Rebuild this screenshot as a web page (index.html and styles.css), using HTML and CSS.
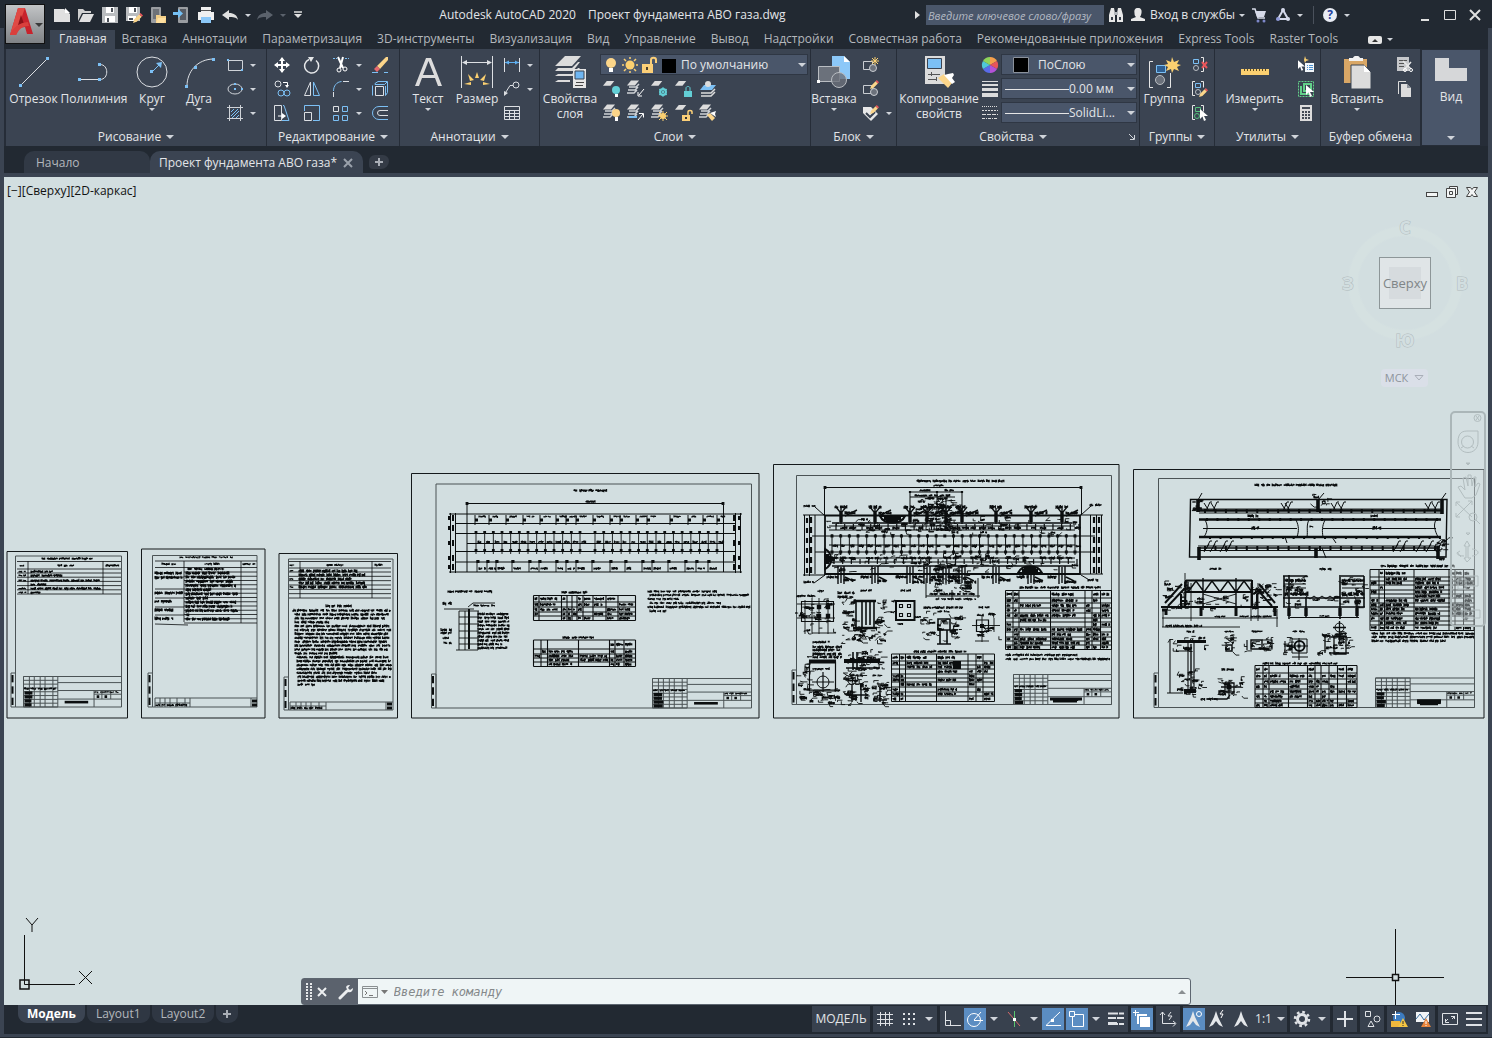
FILE: index.html
```html
<!DOCTYPE html>
<html lang="ru">
<head>
<meta charset="utf-8">
<title>Autodesk AutoCAD 2020 - Проект фундамента АВО газа.dwg</title>
<link rel="stylesheet" href="styles.css">
</head>
<body>
<svg class="sprite" aria-hidden="true">
  <symbol id="stack" viewBox="0 0 16 16"><path d="M4 0h8L8 5H0z" fill="#dcdcdc"/><path d="M2 6.500h7l3-3M1 9.500h7l3-3M0 12.500h7l3-3" fill="none" stroke="#cfd2d6" stroke-width="1.500"/></symbol>
  <symbol id="sheet" viewBox="0 0 16 16"><path d="M4 1h8L8 6H0z" fill="#dcdcdc"/></symbol>
  <symbol id="pencil" viewBox="0 0 8 8"><path d="M0 8l1-3 4-4 2 2-4 4z" fill="#fbd58a"/><path d="M5 1l1-1 2 2-1 1z" fill="#e8555a"/></symbol>
  <symbol id="arrowcur" viewBox="0 0 8 12"><path d="M0 0v10l2.500-2.500L4 12l2-1-2-4h4z" fill="#fff"/></symbol>
  <symbol id="north" viewBox="0 0 18 18"><path d="M9 1l2 6 5 10-4-2-3-4-3 4-4 2 5-10z" fill="#e4e7ea"/></symbol>
</svg>
<div class="app">
  <header class="top">
    <button class="app-button" aria-label="Меню приложения">
      <svg width="27" height="30" viewBox="0 0 27 30"><path d="M2 29L10 2h7l8 26h-6l-2-7-6 1-3 7z" fill="#c8232c"/><path d="M10 2h7l-5 14-4 13H2z" fill="#e04a45"/><path d="M13 9l3 9-6 1z" fill="#8d1219"/><path d="M2 29c3-8 9-12 18-13l1 4c-8 0-10 4-13 9z" fill="#d9403d"/></svg>
      <i class="caret dark"></i>
    </button>
    <div class="titlebar">
      <nav class="qat" aria-label="Быстрый доступ">
        <button aria-label="Создать"><svg width="18" height="18"><path d="M1 3h10l6 5v8H1z" fill="#e0e0e0"/><path d="M12 2l5 5h-5z" fill="#fff"/></svg></button>
        <button aria-label="Открыть"><svg width="18" height="18"><path d="M1 3h5l2 2h6v2H5l-4 8z" fill="#cfcfcf"/><path d="M6 8h11l-4 8H2z" fill="#e0e0e0"/></svg></button>
        <button aria-label="Сохранить"><svg width="18" height="18"><path d="M1 1h16v16H1z" fill="#b9bcbf"/><path d="M5 1h8v6H5zM4 10h10v6H4z" fill="#fff"/><path d="M6 12h2v4H6zM10 2h2v4h-2z" fill="#4a4f57"/></svg></button>
        <button aria-label="Сохранить как"><svg width="18" height="18"><path d="M1 1h14v14H1z" fill="#b9bcbf"/><path d="M4 1h8v6H4zM3 10h8v5H3z" fill="#fff"/><path d="M9 2h2v4H9zM4 12h4v2H4z" fill="#4a4f57"/><use href="#pencil" x="8" y="7" width="10" height="10"/></svg></button>
        <button aria-label="Открыть с мобильного"><svg width="18" height="18"><rect x="2" y="1" width="10" height="16" rx="1" fill="#9a9da1"/><path d="M4 3h6v10H4z" fill="#6e7278"/><path d="M7 9h4l1 1h5v7H7z" fill="#f3cf87"/><path d="M9 12h8l-2 5H7z" fill="#ffe0a0"/></svg></button>
        <button aria-label="Сохранить на мобильный"><svg width="18" height="18"><rect x="5" y="1" width="10" height="16" rx="1" fill="#9a9da1"/><path d="M7 3h6v11H7z" fill="#565b63"/><path d="M0 6h5V3l5 4.500L5 12V9H0z" fill="#74c0f5"/></svg></button>
        <button aria-label="Печать"><svg width="18" height="18"><path d="M4 1h10v5H4zM1 6h16v8h-3v-3H4v3H1z" fill="#f0f0f0"/><path d="M4 4h10v1H4z" fill="#555"/><path d="M4 11h10v6H4z" fill="#8cc8f8"/></svg></button>
        <button aria-label="Отменить"><svg width="18" height="18"><path d="M1 9l7-5v3c5 0 8 2 9 7-2-3-5-3-9-3v3z" fill="#e0e0e0"/></svg></button>
        <button class="drop" aria-label="Список отмены"><i class="caret small"></i></button>
        <button aria-label="Повторить"><svg width="18" height="18"><path d="M17 9l-7-5v3c-5 0-8 2-9 7 2-3 5-3 9-3v3z" fill="#5b626c"/></svg></button>
        <button class="drop" aria-label="Список повтора"><i class="caret small dim"></i></button>
        <button class="drop wide" aria-label="Настройка панели"><svg width="10" height="8"><path d="M1 1h8" stroke="#e0e0e0" stroke-width="1.500"/><path d="M1 3h8L5 7z" fill="#e0e0e0"/></svg></button>
      </nav>
      <h1 class="title"><span>Autodesk AutoCAD 2020</span><span>Проект фундамента АВО газа.dwg</span></h1>
      <div class="info">
        <i class="tri-right"></i>
        <input class="search" type="text" aria-label="Поиск" placeholder="Введите ключевое слово/фразу">
        <button class="i24" aria-label="Найти"><svg width="16" height="16"><path d="M3 1h3l1 5v9H1V8zM13 1h-3L9 6v9h6V8z" fill="#e8e8e8"/><path d="M6 5h4v3H6z" fill="#b5b9be"/><path d="M3 10h2v3H3zM11 10h2v3h-2z" fill="#3a414c"/></svg></button>
        <button class="sign"><svg width="16" height="16"><path d="M8 1c3 0 4 2 3.500 5-.3 2-1 3-1.500 4l5 2v2H1v-2l5-2C4.500 9 4.500 7 4.500 6 4 3 5 1 8 1z" fill="#e8e8e8"/></svg><span>Вход в службы</span><i class="caret small"></i></button>
        <button class="i24" aria-label="Магазин"><svg width="16" height="16"><path d="M1 2h3l3 9h7" fill="none" stroke="#d6dae8" stroke-width="1.500"/><path d="M4 4h11l-2 6H6z" fill="#d6dae8"/><circle cx="7" cy="14" r="1.500" fill="#7d87c9"/><circle cx="13" cy="14" r="1.500" fill="#7d87c9"/></svg></button>
        <button class="i24" aria-label="Autodesk App Store"><svg width="16" height="16"><path d="M8 3l5 9H3z" fill="none" stroke="#d4d9ea" stroke-width="2"/><circle cx="8" cy="3" r="2" fill="#d4d9ea"/><circle cx="3" cy="12" r="2" fill="#8f9ad8"/><circle cx="13" cy="12" r="2" fill="#d4d9ea"/></svg></button>
        <button class="drop" aria-label="Приложения"><i class="caret small"></i></button>
        <i class="sep"></i>
        <button class="i24" aria-label="Справка"><svg width="16" height="16"><circle cx="8" cy="8" r="7" fill="#e9ecf4"/><text x="8" y="12" class="q">?</text></svg></button>
        <button class="drop help-drop" aria-label="Меню справки"><i class="caret small"></i></button>
        <div class="win">
          <button aria-label="Свернуть"><svg width="14" height="14"><path d="M3 12h8" stroke="#e0e0e0" stroke-width="2"/></svg></button>
          <button aria-label="Развернуть"><svg width="14" height="14"><path d="M1.500 2.500h11v9h-11z" fill="none" stroke="#e0e0e0"/></svg></button>
          <button aria-label="Закрыть"><svg width="14" height="14"><path d="M2 2l10 10M12 2L2 12" stroke="#e0e0e0" stroke-width="2"/></svg></button>
        </div>
      </div>
    </div>
    <nav class="tabs" aria-label="Лента">
      <a class="active" href="#">Главная</a><a href="#">Вставка</a><a href="#">Аннотации</a><a href="#">Параметризация</a><a href="#">3D-инструменты</a><a href="#">Визуализация</a><a href="#">Вид</a><a href="#">Управление</a><a href="#">Вывод</a><a href="#">Надстройки</a><a href="#">Совместная работа</a><a href="#">Рекомендованные приложения</a><a href="#">Express Tools</a><a href="#">Raster Tools</a>
      <button class="ribbon-min" aria-label="Свернуть ленту"><svg width="14" height="8"><rect width="14" height="8" rx="2" fill="#e6e6e6"/><path d="M4 6h6L7 3z" fill="#333"/></svg><i class="caret small"></i></button>
    </nav>
  </header>

  <div class="ribbon">
    <section class="panel draw">
      <div class="body">
        <button class="big"><svg width="34" height="34"><path d="M4 29L30 3" stroke="#dcdfe3"/><path d="M2 28h3v3H2zM29 1h3v3h-3z" fill="#7cc0f5"/></svg><span>Отрезок</span></button>
        <button class="big"><svg width="34" height="34"><path d="M3 23.500h20c9 0 9-15 0-15" fill="none" stroke="#dcdfe3"/><path d="M1 22h3v3H1zM21 22h3v3h-3zM21 7h3v3h-3z" fill="#7cc0f5"/></svg><span>Полилиния</span></button>
        <button class="big"><svg width="34" height="34"><circle cx="17" cy="16" r="15" fill="none" stroke="#dcdfe3"/><path d="M17 16l8-8" stroke="#7cc0f5"/><path d="M15 14h3v3h-3zM27 6l-1 6-5-5z" fill="#7cc0f5"/></svg><span>Круг</span><i class="caret small"></i></button>
        <button class="big"><svg width="34" height="34"><path d="M5 30C5 16 15 3 32 3" fill="none" stroke="#dcdfe3"/><path d="M3 29h3v3H3zM12 10h3v3h-3zM30 2h3v3h-3z" fill="#7cc0f5"/></svg><span>Дуга</span><i class="caret small"></i></button>
        <div class="small">
          <button aria-label="Прямоугольник"><svg width="18" height="18"><path d="M2.500 4.500h14v10h-14z" fill="none" stroke="#cfd3d8"/><path d="M1 3h2v2H1zM15 13h2v2h-2z" fill="#7cc0f5"/></svg></button><button aria-label="Прямоугольник, варианты"><i class="caret small"></i></button>
          <button aria-label="Эллипс"><svg width="18" height="18"><ellipse cx="9" cy="9" rx="7" ry="5" fill="none" stroke="#cfd3d8"/><path d="M8 8h2v2H8zM8 3h2v2H8zM15 8h2v2h-2z" fill="#7cc0f5"/></svg></button><button aria-label="Эллипс, варианты"><i class="caret small"></i></button>
          <button aria-label="Штриховка"><svg width="18" height="18"><path d="M1 3.500h16M1 14.500h16M3.500 1v16M14.500 1v16" stroke="#cfd3d8"/><path d="M5 8l3-3M5 12l7-7M6 14l7-7M10 14l3-3" stroke="#7cc0f5"/></svg></button><button aria-label="Штриховка, варианты"><i class="caret small"></i></button>
        </div>
      </div>
      <button class="name">Рисование<i class="caret"></i></button>
    </section>

    <section class="panel edit">
      <div class="body">
        <button aria-label="Перенести"><svg width="18" height="18"><path d="M9 2v14M2 9h14" stroke="#fff" stroke-width="2"/><path d="M9 1l3 4H6zM9 17l3-4H6zM1 9l4-3v6zM17 9l-4-3v6z" fill="#fff"/></svg></button>
        <button aria-label="Повернуть"><svg width="18" height="18"><path d="M6 3.500a7 7 0 1 0 7 1" fill="none" stroke="#e6e8ea" stroke-width="1.500"/><path d="M5 1h6l-3 5z" fill="#e6e8ea"/></svg></button>
        <button aria-label="Обрезать"><svg width="18" height="18"><path d="M1 2.500h4M13 2.500h4" stroke="#7cc0f5" stroke-dasharray="2 1"/><path d="M6 1l5 11M11 1L8 12" stroke="#fff" stroke-width="2"/><circle cx="7" cy="14" r="2" fill="none" stroke="#fff"/><circle cx="13" cy="13" r="2" fill="none" stroke="#fff"/></svg></button>
        <button aria-label="Обрезать, варианты"><i class="caret small"></i></button>
        <button aria-label="Стереть"><svg width="18" height="18"><path d="M1 16.500h6M13 16.500h4" stroke="#7cc0f5"/><path d="M6 10L15 1h2v3l-8 9z" fill="#fbd58a"/><path d="M6 10l3 3-3 3-3-3z" fill="#e8696d"/></svg></button>
        <button aria-label="Копировать"><svg width="18" height="18" fill="none"><circle cx="5" cy="4" r="3" stroke="#dcdfe3"/><path d="M10 2.500h4.500v4" stroke="#fff"/><path d="M12 5h4l-2 3z" fill="#fff"/><circle cx="8" cy="13" r="3" stroke="#7cc0f5"/><circle cx="14" cy="13" r="3" stroke="#7cc0f5"/></svg></button>
        <button aria-label="Зеркало"><svg width="18" height="18" fill="none"><path d="M7.500 2v13.500h-6z" stroke="#dcdfe3"/><path d="M10.500 2v13.500h6z" stroke="#7cc0f5"/></svg></button>
        <button aria-label="Сопряжение"><svg width="18" height="18" fill="none"><path d="M1.500 11c0-5 3-9 8-9.500" stroke="#7cc0f5"/><path d="M11 1.500h6M1.500 12v5" stroke="#dcdfe3"/></svg></button>
        <button aria-label="Сопряжение, варианты"><i class="caret small"></i></button>
        <button aria-label="Расчленить"><svg width="18" height="18" fill="none"><path d="M4.500 6.500h8v9h-8z" stroke="#dcdfe3"/><path d="M1.500 5.500v10M4 3.500l3-2h9.500l-3 3H4zM14.500 6v9.500l2-3V2" stroke="#7cc0f5"/></svg></button>
        <button aria-label="Растянуть"><svg width="18" height="18" fill="none"><path d="M1.500 1.500h7v15h-7z" stroke="#dcdfe3"/><path d="M10 1.500h1l5 15H9" stroke="#7cc0f5"/><path d="M5 12h5" stroke="#fff"/><path d="M9 9l4 3-4 3z" fill="#fff"/></svg></button>
        <button aria-label="Масштаб"><svg width="18" height="18" fill="none"><path d="M1.500 8.500h7v8h-7z" stroke="#dcdfe3"/><path d="M1.500 7V1.500h15v15H10" stroke="#7cc0f5"/></svg></button>
        <button aria-label="Массив"><svg width="18" height="18" fill="none"><path d="M1.500 2.500h5v5h-5z" stroke="#dcdfe3"/><path d="M10.500 2.500h5v5h-5zM1.500 11.500h5v5h-5zM10.500 11.500h5v5h-5z" stroke="#7cc0f5"/></svg></button>
        <button aria-label="Массив, варианты"><i class="caret small"></i></button>
        <button aria-label="Подобие"><svg width="18" height="18" fill="none"><path d="M17 2.500H8a6.500 6.500 0 0 0 0 13h9" stroke="#7cc0f5"/><path d="M17 6.500H9a2.500 2.500 0 0 0 0 5h8" stroke="#dcdfe3"/></svg></button>
      </div>
      <button class="name">Редактирование<i class="caret"></i></button>
    </section>

    <section class="panel annot">
      <div class="body">
        <button class="big"><svg width="34" height="34"><path d="M4 30L15 2h5l11 28h-4l-3-8H11l-3 8zM12 19h11L17.500 5z" fill="#dcdcdc" fill-rule="evenodd"/></svg><span>Текст</span><i class="caret small"></i></button>
        <button class="big"><svg width="34" height="34"><path d="M1.500 0v32M32.500 0v32M3 6.500h28" stroke="#dcdfe3"/><path d="M2 6.500l5-2.500v5zM32 6.500l-5-2.500v5z" fill="#dcdfe3"/><path d="M17 16l2 6h-4zM8 18l6 6-4 1zM26 18l-6 6 4 1zM4 28l7-2v3zM30 28l-7-2v3z" fill="#fbd070"/></svg><span>Размер</span></button>
        <div class="small">
          <button aria-label="Линейный"><svg width="18" height="18"><path d="M1.500 2v14M16.500 2v14" stroke="#dcdfe3"/><path d="M2 6.500h14" stroke="#5fb0f0"/><path d="M2 6.500l4-2v4zM16 6.500l-4-2v4z" fill="#5fb0f0"/></svg></button><button aria-label="Размеры, варианты"><i class="caret small"></i></button>
          <button aria-label="Выноска"><svg width="18" height="18" fill="none"><circle cx="13" cy="5" r="3" stroke="#dcdfe3"/><path d="M10 5.500H7l-5 8" stroke="#dcdfe3"/><path d="M1 16V11l4 2z" fill="#dcdfe3"/></svg></button><button aria-label="Выноска, варианты"><i class="caret small"></i></button>
          <button aria-label="Таблица"><svg width="18" height="18"><path d="M1.500 2.500h15v13h-15zM1 6.500h15M1 9.500h15M1 12.500h15M6.500 6v10M11.500 6v10" fill="none" stroke="#dcdfe3"/></svg></button>
        </div>
      </div>
      <button class="name">Аннотации<i class="caret"></i></button>
    </section>

    <section class="panel layers">
      <div class="body">
        <button class="big"><svg width="34" height="34"><path d="M12 0h16l-9 10H2zM5 12h14l6-6h2l-7 9H2zM5 18h14l6-6h2l-7 8H2zM5 24h12v2H2z" fill="#dcdcdc"/><path d="M20 13h13v19H20z" fill="#e6e6e6"/><path d="M22 15h9v8h-9z" fill="#6fb6f2" stroke="#3b4452"/><path d="M23 26.500h8M22 29.500h8" stroke="#444"/></svg><span>Свойства<br>слоя</span></button>
        <div class="layer-box">
          <div class="combo">
            <svg width="80" height="20"><circle cx="10" cy="8" r="5" fill="#fbd58a"/><path d="M8 13h4v4H8z" fill="#fff"/><circle cx="29" cy="10" r="4.500" fill="#fbd070"/><path d="M29 2v2M29 16v2M21 10h2M35 10h2M23 4l2 2M35 4l-2 2M23 16l2-2M35 16l-2-2" stroke="#fbd070" stroke-width="1.500"/><path d="M41 9h11v9H41z" fill="#fbcf78"/><path d="M50 9V5c0-3 5-3 5 0v3" fill="none" stroke="#fbcf78" stroke-width="2"/><path d="M45 12h2v3h-2z" fill="#4a4030"/><path d="M61 4h14v14H61z"/></svg>
            <select aria-label="Слой"><option>По умолчанию</option></select><i class="caret"></i>
          </div>
          <div class="small">
            <button aria-label="Отключить слой"><svg width="18" height="18"><use href="#sheet" width="15" height="15"/><circle cx="13" cy="10" r="4" fill="#63cfd6"/><path d="M12 14h3v3h-3z" fill="#fff"/></svg></button>
            <button aria-label="Изолировать"><svg width="18" height="18"><use href="#stack" width="16" height="17"/><path d="M17 9l-5 6M11 12v4h4" stroke="#fff" fill="none"/></svg></button>
            <button aria-label="Заморозить"><svg width="18" height="18"><use href="#sheet" width="15" height="15"/><circle cx="12" cy="12" r="3" fill="none" stroke="#63cfd6" stroke-width="2"/><path d="M12 7v10M8 9l8 6M16 9l-8 6" stroke="#63cfd6"/></svg></button>
            <button aria-label="Блокировать"><svg width="18" height="18"><use href="#sheet" width="15" height="15"/><path d="M9 11h8v6H9z" fill="#63cfd6"/><path d="M11 11V8c0-2 4-2 4 0v3" fill="none" stroke="#63cfd6"/></svg></button>
            <button aria-label="Сделать текущим"><svg width="18" height="18"><path d="M5 5h12l-4 5H1z" fill="#7cc0f5"/><path d="M2 13h10l4-4M2 16h10l4-4" fill="none" stroke="#dcdcdc" stroke-width="1.500"/><circle cx="9" cy="4" r="3" fill="#dcdcdc"/></svg></button>
            <button aria-label="Включить все слои"><svg width="18" height="18"><use href="#stack" width="16" height="17"/><circle cx="13" cy="9" r="4" fill="#fbd58a"/><path d="M12 13h3v4h-3z" fill="#fff"/></svg></button>
            <button aria-label="Отключить изоляцию"><svg width="18" height="18"><use href="#stack" width="16" height="17"/><path d="M2 13h8" stroke="#7cc0f5" stroke-width="2"/><path d="M11 16l5-6M12 9.500h4.500v4" stroke="#fff" fill="none"/></svg></button>
            <button aria-label="Разморозить"><svg width="18" height="18"><use href="#stack" width="16" height="17"/><circle cx="12" cy="12" r="3" fill="#fbd070"/><path d="M12 7v10M7 12h10M8 8l8 8M16 8l-8 8" stroke="#fbd070"/></svg></button>
            <button aria-label="Разблокировать"><svg width="18" height="18"><use href="#sheet" width="15" height="15"/><path d="M7 11h8v6H7z" fill="#fbcf78"/><path d="M13 11V8c0-2 4-2 4 0v2" fill="none" stroke="#fbcf78" stroke-width="1.500"/><path d="M10 13h2v2h-2z" fill="#333"/></svg></button>
            <button aria-label="Копировать свойства слоя"><svg width="18" height="18"><use href="#stack" width="16" height="17"/><path d="M8 11l3-2 5 5-3 3z" fill="#fbd58a"/><path d="M11 9l3-1 3-1-1 3 1 3z" fill="#fff"/></svg></button>
          </div>
        </div>
      </div>
      <button class="name">Слои<i class="caret"></i></button>
    </section>

    <section class="panel block">
      <div class="body">
        <button class="big"><svg width="34" height="34"><path d="M15 0h12l6 6v17H15z" fill="#8cc8f8"/><path d="M27 0l6 6h-6z" fill="#fff"/><path d="M1.500 10.500h21v15h-21z" fill="#6b717b" stroke="#b9bdc2"/><circle cx="22" cy="24" r="7.500" fill="#6b717b" fill-opacity=".8" stroke="#b9bdc2"/><path d="M0 24h3v3H0z" fill="#fff"/></svg><span>Вставка</span><i class="caret small"></i></button>
        <div class="small">
          <button aria-label="Создать блок"><svg width="18" height="18"><path d="M1.500 5.500h9v8h-9z" fill="none" stroke="#c9cdd2"/><circle cx="11" cy="12" r="3.500" fill="#6b717b" stroke="#c9cdd2"/><path d="M13 1v8M9 5h8M10 2l6 6M16 2l-6 6" stroke="#fbd070"/></svg></button><span></span>
          <button aria-label="Редактор блоков"><svg width="18" height="18"><path d="M1.500 5.500h9v8h-9z" fill="none" stroke="#c9cdd2"/><circle cx="12" cy="12" r="3.500" fill="#6b717b" stroke="#c9cdd2"/><use href="#pencil" x="8" width="9" height="9"/></svg></button><span></span>
          <button aria-label="Атрибуты"><svg width="18" height="18"><path d="M1 3h8l7 7-7 7-8-8z" fill="#e8e8e8"/><path d="M4 9l4 4 5-5" stroke="#3b4452" stroke-width="2" fill="none"/><use href="#pencil" x="8" y="1" width="9" height="9"/></svg></button><button aria-label="Атрибуты, варианты"><i class="caret small"></i></button>
        </div>
      </div>
      <button class="name">Блок<i class="caret"></i></button>
    </section>

    <section class="panel props">
      <div class="body">
        <button class="big"><svg width="34" height="34"><path d="M3 0h20v28H3z" fill="#dcdcdc"/><path d="M5.500 2.500h14v10h-14z" fill="#7cc0f5" stroke="#3b4452"/><path d="M6 18.500h12M6 23.500h8M9.500 16v4M14.500 21v4" stroke="#555"/><path d="M16 22l6-4 8 9-4 5z" fill="#fbd58a"/><path d="M22 19l4-1 5-1 1 2-2 3 3 4-3 2z" fill="#fff"/></svg><span>Копирование<br>свойств</span></button>
        <div class="prop-grid">
          <svg width="18" height="18"><path d="M9 9V1a8 8 0 0 1 7 4z" fill="#f5a04c"/><path d="M9 9l7-4a8 8 0 0 1 0 8z" fill="#e8555a"/><path d="M9 9l7 4a8 8 0 0 1-7 4z" fill="#b452d8"/><path d="M9 9v8a8 8 0 0 1-7-4z" fill="#5a6be8"/><path d="M9 9l-7 4a8 8 0 0 1 0-8z" fill="#4fc8d8"/><path d="M9 9L2 5a8 8 0 0 1 7-4z" fill="#8fd45a"/></svg>
          <div class="combo"><svg width="36" height="18"><path d="M11.500 1.500h15v15h-15z" stroke="#8b919b"/></svg><select aria-label="Цвет"><option>ПоСлою</option></select><i class="caret"></i></div>
          <svg width="18" height="18"><path d="M1 1.500h16" stroke="#dcdcdc"/><path d="M1 5h16" stroke="#dcdcdc" stroke-width="2"/><path d="M1 9.500h16" stroke="#dcdcdc" stroke-width="3"/><path d="M1 15h16" stroke="#dcdcdc" stroke-width="4"/></svg>
          <div class="combo"><svg width="67" height="18"><path d="M3 9.500h64" stroke="#e6e6e6"/></svg><select aria-label="Вес линий"><option>0.00 мм</option></select><i class="caret"></i></div>
          <svg width="18" height="18"><g stroke="#dcdcdc"><path d="M1 2.500h16" stroke-dasharray="1 1"/><path d="M1 6.500h16" stroke-dasharray="2 1"/><path d="M1 10.500h16" stroke-dasharray="4 1"/><path d="M1 14.500h16" stroke-dasharray="3 1 1 1"/></g></svg>
          <div class="combo"><svg width="67" height="18"><path d="M3 9.500h64" stroke="#e6e6e6"/></svg><select aria-label="Тип линий"><option>SolidLi...</option></select><i class="caret"></i></div>
        </div>
      </div>
      <div class="name-row"><button class="name">Свойства<i class="caret"></i></button><button class="launch" aria-label="Открыть окно свойств"><svg width="6" height="6"><path d="M0 0l5 5M5.500 1v4.500H1" fill="none" stroke="#cfd3d8"/></svg></button></div>
    </section>

    <section class="panel groups">
      <div class="body">
        <button class="big"><svg width="34" height="34" fill="none"><path d="M6 5.500H2.500v26H6M20 31.500h3.500V17" stroke="#e6e6e6"/><path d="M9.500 9.500h9v7h-9z" fill="#2e5f92" stroke="#7cc0f5"/><circle cx="13" cy="24" r="4.500" fill="#6b717b" stroke="#b9bdc2"/><path d="M25 1l2 5 5-2-2 4 4 1-4 2 2 4-5-2-2 4-1-4-5 2 2-4-4-2 4-1-2-4 5 2z" fill="#fbd070"/></svg><span>Группа</span></button>
        <div class="small">
          <button aria-label="Разгруппировать"><svg width="18" height="18" fill="none"><path d="M10 1.500h2.500v14H10" stroke="#e6e6e6"/><path d="M2.500 3.500h5v4h-5z" stroke="#7cc0f5"/><circle cx="5" cy="12" r="2.500" stroke="#b9bdc2"/><path d="M11 6l5 6M16 6l-5 6" stroke="#e8555a" stroke-width="2"/></svg></button>
          <button aria-label="Редактировать группу"><svg width="18" height="18" fill="none"><path d="M4 1.500H1.500v14H4M10 1.500h2.500v6" stroke="#e6e6e6"/><path d="M4.500 3.500h5v4h-5z" stroke="#7cc0f5"/><circle cx="7" cy="12" r="2.500" stroke="#b9bdc2"/><use href="#pencil" x="8" y="8" width="9" height="9"/></svg></button>
          <button aria-label="Выбор группы"><svg width="18" height="18" fill="none"><path d="M4 1.500H1.500v14H4M10 1.500h2.500v6" stroke="#e6e6e6"/><path d="M4.500 3.500h5v4h-5z" stroke="#56c07c"/><circle cx="6" cy="12" r="2.500" stroke="#56c07c"/><use href="#arrowcur" x="9" y="5" width="8" height="12"/></svg></button>
        </div>
      </div>
      <button class="name">Группы<i class="caret"></i></button>
    </section>

    <section class="panel utils">
      <div class="body">
        <button class="big"><svg width="34" height="34"><path d="M3 13h28v6H3z" fill="#fbd070"/><path d="M6.500 13v2M9.500 13v2M12.500 13v2M15.500 13v2M18.500 13v2M21.500 13v2M24.500 13v2M27.500 13v2" stroke="#5a4a20"/></svg><span>Измерить</span><i class="caret small"></i></button>
        <div class="small">
          <button aria-label="Быстрый выбор"><svg width="18" height="18"><path d="M8 7h9v9H8z" fill="#f2f6fa"/><path d="M10 9.500h1M12 9.500h4M10 11.500h1M12 11.500h4M10 13.500h1M12 13.500h4" stroke="#4a90d0"/><path d="M8 0l1 3 3 1-3 1-1 2-1-3z" fill="#fbd070"/><use href="#arrowcur" y="4" x="1" width="7" height="11"/></svg></button>
          <button aria-label="Выбрать все"><svg width="18" height="18" fill="none"><path d="M1.500 1.500h15v15h-15z" stroke="#62d089" stroke-dasharray="2 1"/><path d="M4 6v8h8M7 4h7v7H7z" stroke="#62d089" stroke-width="2"/><use href="#arrowcur" x="9" y="5" width="8" height="12"/></svg></button>
          <button aria-label="Калькулятор"><svg width="18" height="18"><path d="M3 1h12v16H3z" fill="#dcdcdc"/><path d="M5 3h8v2H5z" fill="#444b56"/><path d="M5 8h8M5 11h8M5 14h8" stroke="#444b56" stroke-width="2" stroke-dasharray="2 1"/></svg></button>
        </div>
      </div>
      <button class="name">Утилиты<i class="caret"></i></button>
    </section>

    <section class="panel clip">
      <div class="body">
        <button class="big"><svg width="34" height="34"><path d="M4 3h23v24H4z" fill="#d9a766"/><path d="M9 5V2h4c1-3 6-3 7 0h3v3z" fill="#f2f2f2"/><path d="M11 9h13l7 7v17H11z" fill="#dcdcdc" stroke="#3b4452"/><path d="M24 9l6 7h-6z" fill="#fff"/></svg><span>Вставить</span><i class="caret small"></i></button>
        <div class="small">
          <button aria-label="Вырезать"><svg width="18" height="18"><path d="M1 1h12v14H1z" fill="#c6c8cb"/><path d="M3 4.500h8M3 7.500h5M3 10.500h5" stroke="#555"/><path d="M7 5l8 8M15 6l-7 8" stroke="#e8e8e8" stroke-width="1.500"/><circle cx="9" cy="14" r="1.500" fill="none" stroke="#fff"/><circle cx="15" cy="14" r="1.500" fill="none" stroke="#fff"/></svg></button>
          <button aria-label="Копировать в буфер"><svg width="18" height="18"><path d="M2.500 14V1.500H10" fill="none" stroke="#dcdcdc"/><path d="M5 4h6l4 4v9H5z" fill="#dcdcdc"/><path d="M11 4l4 4h-4z" fill="#8b919b"/></svg></button>
        </div>
      </div>
      <div class="name">Буфер обмена</div>
    </section>

    <button class="view"><svg width="34" height="26"><path d="M1 1h14v10h18v13H1z" fill="#d6d7d9"/></svg><span>Вид</span><i class="caret"></i></button>
  </div>

  <nav class="docs" aria-label="Файлы">
    <a class="doc start" href="#">Начало</a>
    <div class="doc current"><a href="#">Проект фундамента АВО газа*</a><button aria-label="Закрыть файл"><svg width="10" height="10"><path d="M1 1l8 8M9 1L1 9" stroke="#9aa1ab" stroke-width="2"/></svg></button></div>
    <button class="add" aria-label="Новый файл"><svg width="8" height="8"><path d="M4 0v8M0 4h8" stroke="#a9aeb6" stroke-width="2"/></svg></button>
  </nav>

  <main class="canvas">
    <svg class="sheets" id="sheets" viewBox="4 177 1484 828" role="img" aria-label="Листы чертежа"></svg>
    <div class="viewport-label">[−][Сверху][2D-каркас]</div>
    <div class="mdi">
      <button aria-label="Свернуть чертеж"><svg width="14" height="14"><rect x="1.500" y="7.500" width="11" height="4" fill="#f3f5f5" stroke="#444"/></svg></button>
      <button aria-label="Восстановить чертеж"><svg width="14" height="14"><path d="M4.500 1.500h8v8h-8z" fill="#f3f5f5" stroke="#444"/><path d="M1.500 3.500h9v9h-9z" fill="#f3f5f5" stroke="#444"/><path d="M4.500 6.500h3v3h-3z" fill="none" stroke="#444"/></svg></button>
      <button aria-label="Закрыть чертеж"><svg width="14" height="14"><path d="M1.500 2.500h4L7 4.500l1.500-2h4L9.500 7l3 4.500h-4L7 9.500l-1.500 2h-4L4.500 7z" fill="#f3f5f5" stroke="#444"/></svg></button>
    </div>
    <div class="cube">
      <button class="n">С</button><button class="w">З</button><button class="face">Сверху</button><button class="e">В</button><button class="s">Ю</button>
    </div>
    <button class="wcs">МСК<svg width="10" height="6"><path d="M1 .5h8L5 5z" fill="none" stroke="#a9aeb8"/></svg></button>
    <div class="navbar">
      <svg width="34" height="214" fill="none" stroke="#b2bdbf"><circle cx="25.500" cy="5" r="3.500"/><path d="M24 3l3 4M27 3l-3 4"/><path d="M6 29c0-10 5-11 10-11h10v11c0 14-20 14-20 0z"/><circle cx="15.500" cy="29" r="6"/><path d="M9 35l3-2M22 35l-3-2"/><path d="M14 50h4l-2 2z" fill="#b2bdbf"/><path d="M11 82l-5-8 3-1 4 4-2-12 3-1 2 9 0-11h3l1 11 2-9h2l-1 10 3-4 2 1-4 11-4 3h-7z"/><path d="M4 89l16 15M20 88L4 104M4 93v-4h4M16 88h4v4M4 100v4h4"/><circle cx="21" cy="104" r="4"/><path d="M24 107l4 4M14 120h4l-2 2z"/><path d="M15 128l3 5h-2v12h3l-4 4-3-4h2v-12h-2zM8 138c-6 3-1 5 4 5M20 136c8 1 8 6 0 7M5 139l4 5"/><path d="M6 166h8v10H6zM12 163h14v10H14M19 197h9v8H10v-8h5"/></svg>
    </div>
    <svg class="ucs" width="92" height="76" fill="none" stroke="#111"><path d="M20.500 18v49.500H71"/><path d="M16 63h9v9h-9z" stroke-width="1.500"/><path d="M22 1l6 7 6-7M28 8v7M75 54l13 13M88 54L75 67"/></svg>
    <svg class="cross" width="98" height="76" fill="none" stroke="#111"><path d="M49.500 0v46M49.500 52v24M0 48.500h46M52 48.500h46"/><path d="M46.500 45.500h6v6h-6z" stroke-width="1.500"/></svg>
    <div class="cmd">
      <div class="cmd-grip">
        <svg width="6" height="18"><path d="M1 0v18M5 0v18" stroke="#e6e8ea" stroke-width="2" stroke-dasharray="2 1"/></svg>
        <button aria-label="Закрыть"><svg width="10" height="10"><path d="M1 1l8 8M9 1L1 9" stroke="#eceef0" stroke-width="2"/></svg></button>
        <button aria-label="Настройка"><svg width="16" height="16"><path d="M2 14l7-7" stroke="#eceef0" stroke-width="3" stroke-linecap="round"/><path d="M8 3c1-2 3-2 4-2L10 4l2 2 3-2c0 3-2 5-5 4z" fill="#eceef0"/></svg></button>
      </div>
      <svg width="28" height="14"><path d="M.5 1.500h15v11H.5zM0 3.500h15" fill="none" stroke="#8b9092"/><path d="M3 6l2 2-2 2M7 10.500h4" fill="none" stroke="#777"/><path d="M19 5h7l-3.500 4z" fill="#777"/></svg>
      <input type="text" aria-label="Командная строка" placeholder="Введите команду">
      <button aria-label="История команд"><i class="caret up"></i></button>
    </div>
  </main>

  <footer class="bottom">
    <nav class="layouts" aria-label="Листы"><a class="active" href="#">Модель</a><a href="#">Layout1</a><a href="#">Layout2</a><button aria-label="Новый лист"><svg width="8" height="8"><path d="M4 0v8M0 4h8" stroke="#a9aeb6" stroke-width="2"/></svg></button></nav>
    <div class="status">
      <div class="grp"><button class="model">МОДЕЛЬ</button></div>
      <div class="grp"><button aria-label="Сетка"><svg width="18" height="18"><path d="M4.500 2v14M9.500 2v14M13.500 2v14M1 4.500h16M1 9.500h16M1 13.500h16" stroke="#dfe2e6"/></svg></button><button aria-label="Привязка"><svg width="18" height="18"><path d="M3 4h14M3 9h14M3 14h14" stroke="#dfe2e6" stroke-width="2" stroke-dasharray="2 3"/></svg></button><button class="dd" aria-label="Варианты привязки"><i class="caret"></i></button></div>
      <div class="grp"><button aria-label="Орто"><svg width="18" height="18" fill="none"><path d="M2.500 1v14.500H18M2.500 10.500h5v5" stroke="#dfe2e6"/></svg></button><button class="on" aria-label="Полярное отслеживание"><svg width="18" height="18" fill="none" stroke="#fff"><circle cx="8" cy="10" r="6.500"/><path d="M8 10.500h9M8 10l7-8"/></svg></button><button class="dd" aria-label="Углы"><i class="caret"></i></button><button aria-label="Изометрия"><svg width="18" height="18"><path d="M3 2l12 14" stroke="#d66a6a"/><path d="M9.500 1v16" stroke="#5bc46f"/><path d="M8 8h3v3H8z" fill="#fff"/></svg></button><button class="dd" aria-label="Плоскости"><i class="caret"></i></button><button class="on" aria-label="Отслеживание"><svg width="18" height="18"><path d="M16 2L2 15.500h15" fill="none" stroke="#fff"/><path d="M7 9h3v3H7z" fill="#fff"/></svg></button><button class="on gap" aria-label="Объектная привязка"><svg width="18" height="18" fill="none" stroke="#fff"><path d="M4.500 6v10.500h11v-12H7M1.500 1.500h5v5h-5z"/></svg></button><button class="dd" aria-label="Варианты привязки"><i class="caret"></i></button><button aria-label="Вес линий"><svg width="18" height="18"><path d="M1 3.500h10M12 3.500h5M1 8h8M10 8h7M1 14h10M12 14h5" stroke="#dfe2e6" stroke-width="2"/><path d="M1 13.500h9" stroke="#dfe2e6" stroke-width="3"/></svg></button></div>
      <div class="grp"><button class="on" aria-label="Циклический выбор"><svg width="18" height="18"><path d="M5 14V5h9" fill="none" stroke="#fff" stroke-width="2"/><path d="M7 7h10v10H7z" fill="#fff"/><path d="M2.500 0v6M0 2.500h6" stroke="#fff"/></svg></button></div>
      <div class="grp"><button aria-label="Динамическая ПСК"><svg width="18" height="18" fill="none" stroke="#dfe2e6"><path d="M3.500 2v11.500H16M1 5l2.500-3L6 5M14 11l3 2.500-3 3"/><path d="M12 2L9 6h4l-3 4"/></svg></button></div>
      <div class="grp"><button class="on" aria-label="Видимость аннотаций"><svg width="18" height="18"><use href="#north" x="-1" width="18" height="18"/><circle cx="14" cy="4" r="2.500" fill="none" stroke="#fff"/></svg></button><button aria-label="Автомасштаб"><svg width="18" height="18"><use href="#north" x="-1" width="18" height="18"/><path d="M15 0l-3 4h3l-2 4" fill="none" stroke="#fff"/></svg></button><button aria-label="Масштаб аннотаций"><svg width="18" height="18"><use href="#north" width="18" height="18"/></svg></button><button class="scale">1:1<i class="caret"></i></button></div>
      <div class="grp"><button aria-label="Рабочее пространство"><svg width="18" height="18" fill="none" stroke="#dfe2e6"><circle cx="9" cy="9" r="4.500" stroke-width="3"/><circle cx="9" cy="9" r="7" stroke-width="2.500" stroke-dasharray="2.700 2.800"/></svg></button><button class="dd" aria-label="Пространства"><i class="caret"></i></button></div>
      <div class="grp"><button aria-label="Монитор аннотаций"><svg width="18" height="18"><path d="M9 1v16M1 9h16" stroke="#dfe2e6" stroke-width="2"/></svg></button></div>
      <div class="grp"><button aria-label="Изолировать объекты"><svg width="18" height="18" fill="none" stroke="#dfe2e6"><path d="M2.500 1.500h5v5h-5zM8 11l3 5.500H5z"/><circle cx="14" cy="9" r="3"/></svg></button></div>
      <div class="grp"><button aria-label="Аппаратное ускорение"><svg width="18" height="18"><circle cx="9" cy="8" r="6" fill="#3d7cc0"/><path d="M1 11h9v6H1z" fill="#f0b83c"/><path d="M2 4.500h8M5.500 1v8" stroke="#fff"/><path d="M13 8l5 9H8z" fill="#f5c542"/><path d="M13 11v3M13 15v1" stroke="#333"/></svg></button><button aria-label="Производительность"><svg width="18" height="18"><path d="M2 2h13v10H2z" fill="#f2f4f6"/><path d="M2 9l4-5 4 6 5-6" fill="none" stroke="#3a6f9f"/><path d="M12 8l5 9H7z" fill="#e8843c"/><path d="M12 11v3M12 15v1" stroke="#fff"/></svg></button></div>
      <div class="grp"><button aria-label="Очистить экран"><svg width="18" height="18" fill="none" stroke="#dfe2e6"><path d="M1.500 3.500h15v11h-15zM4.500 9v3.500H8M4 12l3-3M13.500 9V6.500H10M14 6l-3 3"/></svg></button><button aria-label="Настройка"><svg width="18" height="18"><path d="M1 3h16M1 9h16M1 15h16" stroke="#dfe2e6" stroke-width="2"/></svg></button></div>
    </div>
  </footer>
</div>
<script src="sheets.js"></script>
</body>
</html>
```

FILE: styles.css
```css
:root {
  --shell: #222932;
  --panel: #3b4452;
  --field: #4a566a;
  --line: #262d38;
  --text: #e3e5e8;
  --muted: #b4b8bd;
  --paper: #d2dee0;
}
* { box-sizing: border-box; }
body {
  margin: 0;
  background: var(--shell);
  color: var(--text);
  font: 12px/16px "Open Sans", "Noto Sans", sans-serif;
}
button, input, select { font: inherit; color: inherit; }
button {
  display: flex;
  flex: none;
  align-items: center;
  justify-content: center;
  padding: 0;
  border: 0;
  background: none;
  white-space: nowrap;
}
a { color: inherit; text-decoration: none; }
svg { display: block; flex: none; }
.sprite { position: absolute; width: 0; height: 0; }
.caret {
  flex: none;
  width: 0;
  height: 0;
  border: 4px solid transparent;
  border-top-color: #d0d4da;
  border-bottom: 0;
}
.caret.small { border-width: 3px 3px 0; }
.caret.dim { border-top-color: #5b626c; }
.caret.dark { align-self: center; border-top-color: #3a3a3a; }
.caret.up { border: 4px solid transparent; border-top: 0; border-bottom-color: #8a8f92; }

.app {
  display: flex;
  flex-direction: column;
  min-height: 100vh;
  padding: 0 4px 3px;
  border-bottom: 1px solid #222932;
  background: linear-gradient(#222932 28px, #3b4452 28px);
}
.top {
  display: grid;
  grid-template-columns: 46px 1fr;
  grid-template-rows: 30px 19px;
  background: var(--shell);
}
.app-button {
  grid-row: 1 / 3;
  align-items: flex-start;
  width: 40px;
  height: 40px;
  margin: 4px 0 0 1px;
  padding-top: 1px;
  border: 1px solid #111;
  background: linear-gradient(#c2c4c6, #7f8285);
}
.titlebar { display: flex; align-items: center; }
.qat { display: flex; width: 260px; }
.qat button { width: 24px; height: 24px; }
.qat .drop { width: 11px; }
.qat .wide { width: 20px; }
.title {
  display: flex;
  flex: 1;
  justify-content: center;
  gap: 12px;
  margin: 0;
  font: inherit;
  white-space: nowrap;
}
.info { display: flex; align-items: center; }
.tri-right { border: 4px solid transparent; border-left: 5px solid #e0e0e0; border-right: 0; margin-right: 6px; }
.search {
  width: 178px;
  height: 20px;
  padding: 0 2px;
  border: 0;
  background: var(--field);
  font-style: italic;
  font-size: 11px;
}
.search::placeholder { color: #b2b8c2; opacity: 1; }
.i24 { width: 24px; height: 24px; }
.sign { gap: 4px; width: 119px; }
.drop { width: 10px; }
.sep { width: 1px; height: 18px; margin: 0 4px 0 8px; background: #4a515c; }
.help-drop { margin-right: 66px; }
.win { display: flex; gap: 11px; padding-right: 6px; }
.win button { width: 14px; height: 20px; }
.tabs { display: flex; color: var(--muted); white-space: nowrap; }
.tabs a { padding: 1px 8px 2px 7px; }
.tabs .active { padding-left: 9px; background: var(--panel); color: var(--text); }
.ribbon-min { gap: 5px; margin-left: 22px; }

.ribbon { display: flex; gap: 1px; height: 97px; padding-left: 2px; background: var(--line); }
.panel { display: flex; flex-direction: column; flex: none; background: var(--panel); }
.body { display: grid; flex: 1; padding-top: 4px; align-content: start; }
.name { display: flex; align-items: center; align-self: center; gap: 5px; height: 19px; }
.name-row { display: grid; grid-template-columns: 1fr auto; padding-right: 4px; }
.name-row .name { justify-self: center; }
.big { flex-direction: column; justify-content: flex-start; line-height: 15px; padding-top: 3px; }
.big span { margin-top: 1px; }
.big .caret { margin-top: 2px; }
.small { display: grid; grid-auto-rows: 24px; align-content: start; }
.draw { width: 260px; }
.draw .body { grid-template-columns: 55px 66px 50px 44px 38px; }
.draw .small, .annot .small, .block .small { grid-template-columns: 28px 8px; }
.edit { width: 132px; }
.edit .body { grid-template-columns: 29px 31px 28px 8px 34px; grid-auto-rows: 24px; }
.annot { width: 139px; }
.annot .body { grid-template-columns: 56px 42px 38px; }
.layers { width: 270px; }
.layers .body { grid-template-columns: 60px 208px; }
.layer-box .small { grid-template-columns: repeat(5, 24px); }
.combo {
  display: flex;
  align-items: center;
  height: 21px;
  margin: 1px 0 2px;
  padding-right: 1px;
  border: 1px solid #2f3744;
  background: var(--field);
}
.combo select { flex: 1; min-width: 0; height: 18px; padding: 0; border: 0; background: none; appearance: none; }
.block { width: 85px; }
.block .body { grid-template-columns: 46px 38px; }
.props { width: 242px; }
.props .body { grid-template-columns: 84px 156px; }
.prop-grid { display: grid; grid-template-columns: 20px 136px; grid-auto-rows: 24px; align-items: center; }
.groups { width: 74px; }
.groups .body { grid-template-columns: 48px 24px; }
.utils { width: 105px; }
.utils .body { grid-template-columns: 79px 24px; }
.clip { width: 99px; }
.clip .body { grid-template-columns: 72px 24px; }
.view {
  flex-direction: column;
  width: 60px;
  margin: 1px 0;
  padding: 7px 0 5px;
  border: solid var(--line);
  border-width: 0 1px;
  background: var(--field);
}
.view span { margin: 6px 0 auto; }

.docs {
  display: flex;
  align-items: flex-end;
  height: 31px;
  padding-left: 20px;
  border-bottom: 4px solid var(--panel);
  background: var(--shell);
}
.doc { display: flex; align-items: center; height: 22px; padding: 1px 12px 0; border-radius: 10px 10px 0 0; white-space: nowrap; }
.start { width: 126px; background: #313945; color: var(--muted); }
.current { gap: 6px; padding: 1px 10px 0 9px; background: var(--panel); }
.add { width: 20px; height: 14px; margin: 0 0 4px 6px; border-radius: 6px 6px 8px 4px; background: #343b46; }

.canvas { position: relative; flex: 1; min-height: 500px; overflow: hidden; background: var(--paper); }
.sheets { position: absolute; inset: 0; width: 100%; height: 100%; }
.viewport-label { position: absolute; left: 3px; top: 6px; color: #111; }
.mdi { position: absolute; right: 9px; top: 8px; display: flex; gap: 6px; }
.cube {
  position: absolute;
  right: 20px;
  top: 40px;
  display: grid;
  grid-template: 39px 54px 39px / 36px 54px 36px;
  grid-template-areas: ". n ." "w f e" ". s .";
  color: var(--paper);
  font-size: 18px;
  font-weight: bold;
  background: radial-gradient(circle, transparent 46px, #d5e1e1 48px, #d5e1e1 56px, transparent 58px);
}
.cube button { -webkit-text-stroke: 1px #b0babc; paint-order: stroke; }
.cube .n { grid-area: n; align-items: flex-start; line-height: 20px; }
.cube .s { grid-area: s; align-items: flex-end; line-height: 18px; }
.cube .w { grid-area: w; justify-content: flex-start; }
.cube .e { grid-area: e; justify-content: flex-end; }
.cube .face {
  grid-area: f;
  margin: 1px;
  border: 1px solid #8d9698;
  background: linear-gradient(#d6dbde, #d6dbde) center / 32px 32px no-repeat #e0e5e7;
  color: #7f8587;
  font-size: 13px;
  font-weight: normal;
  -webkit-text-stroke: 0;
}
.wcs { position: absolute; right: 60px; top: 192px; gap: 6px; width: 47px; height: 18px; border-radius: 4px; background: #dadfe8; color: #8d939b; font-size: 11px; }
.navbar { position: absolute; right: 2px; top: 234px; border: 2px solid #abb6b8; border-radius: 5px; width: 36px; height: 216px; background: #d7e2e466; }
.ucs { position: absolute; left: 0; bottom: 12px; }
.cross { position: absolute; right: 44px; bottom: 0; }
.cmd {
  position: absolute;
  left: 20%;
  right: 20%;
  bottom: 0;
  display: flex;
  align-items: center;
  height: 27px;
  border: 1px solid #5d6670;
  border-radius: 3px;
  background: #eff5f6;
}
.cmd-grip { display: flex; align-items: center; align-self: stretch; gap: 5px; width: 56px; padding-left: 4px; margin-right: 4px; background: #5b626d; }
.cmd-grip button + button { margin-left: 6px; }
.cmd input { flex: 1; min-width: 0; border: 0; background: none; padding: 0 4px; font: italic 12px "DejaVu Sans Mono", monospace; }
.cmd input::placeholder { color: #85898b; opacity: 1; }
.cmd > button { width: 16px; }

.bottom { display: flex; justify-content: space-between; height: 29px; background: var(--shell); }
.layouts { display: flex; gap: 2px; height: 18px; padding-left: 14px; color: var(--muted); }
.layouts a, .layouts button { padding: 0 9px; border-radius: 0 0 9px 9px; background: #2f3743; line-height: 18px; }
.layouts .active { background: var(--panel); color: #fff; font-weight: bold; }
.layouts button { padding: 0 7px; }
.status { display: flex; gap: 3px; padding: 1px 2px 2px 0; }
.grp { display: flex; align-items: center; height: 26px; background: #38414e; }
.grp button { width: 24px; height: 26px; }
.grp .model { width: 58px; }
.grp .on { width: 22px; height: 22px; background: #5b8dc2; }
.grp .gap { margin-left: 2px; }
.grp .dd { width: 16px; }
.grp .scale { gap: 5px; width: 34px; }
.ink { fill: none; stroke: #0b0e0f; }
.frame { fill: none; stroke: #14191b; stroke-width: 1; }
.thin { fill: none; stroke: #4b5355; stroke-width: 1; }
.q { fill: #1f3f9f; font-weight: bold; font-size: 12px; text-anchor: middle; }
```

FILE: sheets.js
```js
// Draws the six drawing sheets of the model space.
const out = [];
let seed = 7;
const rnd = () => (seed = (seed * 16807) % 2147483647) / 2147483647;
const path = (d, w = 1, cls = 'ink') => out.push(`<path class="${cls}" stroke-width="${w}" d="${d}"/>`);
const rect = (x, y, r, b, w = 1, cls = 'ink') => path(`M${x} ${y}H${r}V${b}H${x}Z`, w, cls);

// A line of lettering from x to r: words made of uneven upright strokes.
function text(x, r, y, h = 2.6) {
  let d = '';
  while (x < r - 1) {
    const end = Math.min(r, x + 3 + rnd() * rnd() * 14);
    for (; x < end; x += 0.9) {
      const k = h * (0.5 + rnd() * 0.6);
      d += `M${x.toFixed(1)} ${(y - k / 2 + rnd() * 0.8 - 0.4).toFixed(1)}v${k.toFixed(1)}`;
    }
    x += 0.8 + rnd() * 1.4;
  }
  path(d, 1.1);
}
// Ruled table: xs and ys are line positions; fill is the share of cells with lettering.
function table(xs, ys, fill = 0.8, w = 1, h = 2.4) {
  const l = xs[0], r = xs[xs.length - 1], t = ys[0], b = ys[ys.length - 1];
  path(xs.map(x => `M${x} ${t}V${b}`).join('') + ys.map(y => `M${l} ${y}H${r}`).join(''), w);
  for (let j = 0; j + 1 < ys.length; j++)
    for (let i = 0; i + 1 < xs.length; i++)
      if (rnd() < fill) {
        const cw = xs[i + 1] - xs[i];
        text(xs[i] + 1.5, xs[i] + cw * (0.6 + rnd() * 0.35), (ys[j] + ys[j + 1]) / 2, h);
      }
}
const steps = (a, b, n) => Array.from({ length: n + 1 }, (_, i) => a + (b - a) * i / n);
// Cluster of leaders and small marks.
function marks(x, y, r, b, n) {
  let d = '';
  for (let i = 0; i < n; i++) {
    const px = x + rnd() * (r - x), py = y + rnd() * (b - y);
    const dx = rnd() < 0.5 ? 0 : rnd() * 8 - 4;
    d += `M${px.toFixed(1)} ${py.toFixed(1)}l${dx.toFixed(1)} ${(rnd() * 8 - 4).toFixed(1)}h${(2 + rnd() * 3).toFixed(1)}`;
    if (i % 3 === 0) text(px, Math.min(r, px + 6), py, 2.6);
  }
  path(d, 0.9);
}
function dots(xs, y, s = 2.4) {
  path(xs.map(x => `M${x - s / 2} ${y}h${s}`).join(''), s);
}
function sheet(x, y, r, b, ix, iy, ir, ib, tabTop) {
  rect(x, y, r, b, 1.3, 'frame');
  rect(ix, iy, ir, ib, 1, 'thin');
  path(`M${ix - 4.5} ${tabTop}H${ix}V${ib}H${ix - 4.5}Z`, 1, 'thin');
  const m = (ib - tabTop) / 3;
  for (let i = 0; i < 3; i++) path(`M${ix - 3} ${tabTop + m * i + 2}v${m - 4}`, 2);
}
// Title block with its revision grid.
function stamp(x, y, r, b) {
  const w = r - x, h = b - y, g = x + w * 0.35;
  path([0, .06, .11, .17, .22, .3, .35].map(k => `M${x + w * k} ${y}V${b}`).join('') +
    steps(y, b, 8).map(v => `M${x} ${v}H${g}`).join('') +
    `M${x} ${y}H${r}V${b}M${g} ${y + h * .2}H${r}M${g} ${y + h * .46}H${r}M${g} ${y + h * .74}H${r}M${x + w * .72} ${y + h * .46}V${b}M${x + w * .72} ${y + h * .58}H${r}M${x + w * .8} ${y + h * .46}V${y + h * .74}M${x + w * .89} ${y + h * .46}V${y + h * .74}`, 0.8, 'thin');
  text(x + 1, g - 2, y + h * .4, 2);
  for (let i = 0; i < 4; i++) path(`M${x + 1} ${y + h * (.54 + i * .13)}h${w * (.07 + rnd() * .03)}`, 3.2);
  text(x + w * .73, r - 3, y + h * .51, 1.6);
  dots([x + w * .76, x + w * .84], y + h * .66, 2.6);
  path(`M${x + w * .42} ${y + h * .84}h${w * .24}`, 2.6);
}

// Contents sheets
sheet(7, 551.5, 127.5, 718, 15.5, 556, 121.5, 707, 673);
text(42, 96, 558.6, 2.4);
path('M17 561.500H121M17 569H121M28 561V594M103 561V594' + steps(573, 594, 5).map(v => `M17 ${v}H121`).join(''), 0.8);
text(20, 25, 565.5, 2); text(58, 74, 565.5, 2.2); text(106, 119, 565.5, 2.2);
[[571.5, 54], [575.5, 62], [580.5, 100], [584.5, 46], [588.5, 101], [592.5, 40]].forEach(([y, r], i) => { text(31, r, y); if (i !== 3) text(19, 26, y, 1.8); });
stamp(23.5, 676.5, 121.5, 707);

sheet(141.5, 549, 265, 718, 152.5, 555.5, 257, 707, 673);
text(180, 233, 557.2, 1.8);
path('M155 561H257M155 567.500H257M184 561V622M241 561V623' + steps(572, 623, 12).map(v => `M184 ${v}H257`).join('') + 'M155 577H184M155 589H184M155 598H184M155 607H184M155 615H184M155 624l33 1', 0.8);
text(162, 176, 564, 2.2); text(205, 220, 564, 2.2); text(243, 255, 564, 2.2);
text(188, 224, 569, 2.4);
steps(573, 619, 11).forEach((y, i) => text(186, [230, 236, 234, 236, 214, 238, 208, 236, 232, 238, 190, 230][i], y, 3.2));
[[573, 182], [577.5, 182], [593, 183], [601.5, 174], [610, 173], [618.5, 173]].forEach(([y, r]) => text(155, r, y, 3.2));
path('M155 698H257M155 703H190' + [155, 160, 165, 170, 177, 185, 190, 251].map(x => `M${x} 698V707`).join(''), 0.8, 'thin');
text(156, 188, 705, 2.4); path('M252 701h5M252 705h5', 3);

sheet(279, 553.5, 397.5, 718, 288.5, 559, 393, 710, 677);
path('M289 561.500H391M289 568H391M300 561V598M372 561V598' + steps(572, 598, 6).map(v => `M289 ${v}H391`).join(''), 0.8);
text(290, 295, 565, 2); text(327, 343, 565, 2.2); text(375, 386, 565, 2.2);
[[571, 357], [575, 366], [579, 353], [583, 367], [587, 368]].forEach(([y, r], i) => { text(299, r, y, 3.2); if (i % 2 === 0) text(290, 293, y, 2); });
text(326, 354, 606, 3);
[[293, 391], [295, 390], [295, 385], [295, 329], [295, 389], [295, 391], [295, 388], [295, 389], [295, 389], [295, 390], [295, 388], [295, 337], [297, 388], [297, 391], [297, 392], [297, 392], [297, 378], [298, 391], [298, 384], [298, 315]].forEach(([x, r], i) => text(x, r, 610.5 + i * 3.9, 2.7));
path('M290 702H393M290 706H326' + [290, 296, 301, 306, 311, 319, 326, 386].map(x => `M${x} 702V710`).join(''), 0.8, 'thin');
text(291, 325, 708, 2.4); path('M387 704h5M387 708h5', 3);

// Pile field plan
sheet(411.5, 473.5, 759, 718, 436, 484, 751.5, 708, 674);
text(574, 608, 490.5, 2.6);
path('M467 503.500H724M467 502V572M723.500 502V572M450.500 513V573M455.500 513V573M735.500 513V573M740.500 513V573M449 514H742M455 523.500H735M455 533.500H735M467 543.500H723M455 551.500H735M455 562H735M449 572H742', 1);
dots([467, 723], 503.5, 2.8); text(586, 595, 501.5, 2.4);
[475, 489, 506, 523, 540, 556, 566, 576, 593, 610, 620, 636, 647, 670, 688, 703, 717].forEach(x => { path(`M${x} 515v10`, 1); dots([x + 1.5], 520, 3); text(x + 4, x + 11, 516.5, 2); });
const piles = [...steps(476, 580, 12), ...steps(595, 717, 14)];
path(piles.map(x => `M${x} 531v23`).join(''), 0.9);
dots(piles, 532.5, 2.8); dots(piles, 550.5, 2.8);
piles.forEach(x => text(x + 2, x + 7, 542, 2.4));
[477, 487, 496, 512, 529, 539, 556, 566, 576, 592, 610, 625, 642, 652, 668, 685, 696, 708].forEach(x => { path(`M${x} 560v12`, 0.9); dots([x + 1], 561.5, 3); text(x + 2, x + 9, 568.5, 2.6); });
[518, 528, 543, 558, 567].forEach(y => { path(`M453 ${y - 3}v6M734 ${y - 3}v6M449 ${y - 2}v4M739 ${y - 2}v4`, 2); });
text(448, 492, 591.5, 2.4);
text(443, 452, 603.5, 3); path('M444 609h30M468 607l5-4h22M465 611v39M459 611h20M459 617h20M459 624h20M459 631h20M459 638h20M459 644h20M456 650h22M459 611V650M478 611V650', 0.9);
path('M469 609v40', 2);
text(474, 495, 605.5, 2);
steps(614, 648, 9).forEach((y, i) => text(478, i === 8 ? 502 : 509, y, 2.6));
text(441, 452, 630, 3); text(441, 452, 633, 2.4); text(443, 450, 638, 2.4); text(444, 452, 643, 2.4);
text(562, 587, 592.5, 2.6);
table([533.5, 539, 561.5, 567, 572, 577, 583, 593, 606, 618, 635.5], [595.5, 602, 607, 612, 616, 620.5], 0.65, 1.1, 2.8);
text(563, 594, 637.5, 2.6);
table([533.5, 541, 547.5, 578.5, 609.5, 615, 624, 635.5], [640, 649, 654, 658, 662, 666.5], 0.6, 1.1, 3);
[[591.5, 717], [595, 750], [599, 679], [603, 721], [607, 750], [611, 669]].forEach(([y, r], i) => text(i % 2 ? 650 : 648, r, y, 2.4));
stamp(652.5, 678.5, 751.5, 708);

// Reinforcement layout
sheet(773.5, 464.5, 1119, 718, 796.5, 475.5, 1111.5, 704.5, 670);
text(917, 1004, 481, 2.6); text(934, 943, 485.5, 2);
path('M825 487.500H1081M824.500 486V515M1081.500 486V515M910 492H962M910 497H955M910 492V520M937 492V514M946 497V514M962 492V518', 1);
dots([825, 1081], 487.5, 2.8); dots([910, 937, 962], 492, 2.2);
text(920, 930, 490.5, 2.4); text(945, 955, 490.5, 2.4); text(915, 952, 495.5, 2.4);
rect(825, 515.5, 1080, 574, 1.8);
path('M804.500 515V576M809.500 515V576M815 515V574M1090.500 515V574M1096.500 515V574M1101.500 515V574M803 515H825M803 575H825M1080 515H1103M1080 574H1103M812 536H1095M829 526H1075M829 530H1075M815 552H1095M829 545H1075M829 558H1075M829 562H1075', 1);
path('M832 566H1072M832 523H1072', 1.4);
const bars = steps(832, 1075, 28);
path(bars.filter((_, i) => i !== 13).map(x => `M${x} 534v21`).join(''), 1);
dots(bars, 536, 3); dots(bars, 552, 3);
bars.forEach(x => { text(x + 1, x + 6, 546, 2.8); if (rnd() < .7) text(x, x + 7, 528, 2.8); if (rnd() < .8) text(x, x + 6, 558, 2.8); path(`M${x + 2} 559v5M${x + 4} 524v6`, 1.2); });
[841, 875, 910, 927, 946, 962, 996, 1031, 1062].forEach((x, i) => {
  path(`M${x - 5} 507l4 5v10M${x + 5} 507l-4 5v10M${x} 508v16M${x + 4} 516l12-6`, 1.4);
  text(x - 6, x + 6, 507, 3.4); text(x + 4, x + 16, 513, 3);
  path(`M${x - 3} 566v18M${x} 567v16M${x + 3} 566v18M${x + 4} 577l8 4`, 1.4);
  text(x - 14, x - 3, 577, 3); text(x + 3, x + 14, 580 + i % 3, 3);
});
path('M880 516h25c-4 9-21 9-25 0zM825 549c8 4 8 16 0 20zM1018 573c4-9 20-9 24 0z', 2);
path('M884 518h17M886 520h12M827 554v10M829 556v6M1022 571h16M1024 569h12', 4);
marks(915, 498, 960, 514, 46); marks(924, 514, 955, 530, 26); marks(935, 565, 972, 592, 46);
marks(826, 516, 1078, 533, 60); marks(826, 553, 1078, 572, 60);
path('M926 596H980M926 598V578M952 598V590M978 598V578', 1); text(930, 975, 594, 2.4); text(936, 976, 599, 2.2);
steps(520, 570, 5).forEach(y => { path(`M811 ${y - 3}v6M807 ${y - 2}v5M1094 ${y - 3}v6M1099 ${y - 3}v6`, 2.2); });
text(804, 815, 506, 2.6); text(1090, 1101, 505, 2.6); text(804, 814, 582, 2.4); text(1088, 1098, 580, 2.4); path('M815 507l10 9M1081 515l10-9M814 583l11-8M1081 575l10 6', 1);
// details
text(818, 826, 591, 2.4); text(797, 815, 596, 2.4);
rect(801.5, 601.5, 833.5, 621.5, 1.1); dots([819, 828], 607, 4.4); dots([819, 828], 616, 4.4);
path('M797 604h38M797 618h38M805 600v34M812 598v36M819 598v36M828 598v36M812 633h24', 0.9); marks(797, 600, 834, 633, 26);
text(838, 855, 593, 3); text(838, 853, 597, 3); text(861, 874, 590.5, 2.4);
path('M856 601v28M862 601v28M866 601v24M870 601v24M874 601v28', 1.6); path('M854 601h22M853 628h24', 2.4); marks(842, 600, 856, 642, 26); marks(875, 600, 886, 642, 20); marks(856, 628, 876, 642, 16);
text(901, 911, 590.5, 2.4); rect(896, 601, 914.5, 620, 2);
[901, 909].forEach(x => [606, 615].forEach(y => rect(x - 1.5, y - 1.5, x + 1.5, y + 1.5, 1.1)));
text(892, 898, 601, 2); text(915, 921, 617, 2); text(898, 904, 624, 2); text(891, 896, 612, 2);
text(924, 963, 607.5, 2.6); text(938, 951, 611.5, 2); rect(938, 619, 950, 630, 1.6); path('M940 630v14M947 630v14M937 644h14', 1.6); marks(920, 613, 963, 641, 36);
text(979, 989, 607.5, 2.4); rect(976.5, 620, 988.5, 631.5, 1.2); path('M972 625.500h28M982 615v27M975 641h14M994 618v14', 0.9); dots([982], 626, 4); marks(976, 612, 999, 640, 12);
text(813, 830, 642, 2.4); [647, 650, 654, 657].forEach(y => text(813, 842, y, 3));
rect(809.5, 662, 835.5, 691, 1.2); out.push('<circle class="ink" cx="823" cy="682" r="6"/>'); path('M809 661.500h27', 4); path('M806 690h32M823 672v20M812 682h22', 1.2); marks(797, 655, 810, 700, 20); marks(810, 690, 842, 703, 26); text(813, 830, 669, 2.4);
path('M844 661h36', 4); path('M846 668h34M853 652v18M857 652v18', 1.6); marks(842, 652, 884, 672, 36); marks(843, 674, 868, 703, 44); marks(872, 680, 888, 703, 28); text(850, 862, 675.5, 2); text(873, 884, 675.5, 2);
path('M846 695h22M852 684v18M861 684v18M873 700h14M880 686v16', 1.4);
text(914, 966, 651.5, 2.6);
table([891.5, 899.5, 905.5, 936.5, 968, 976, 983, 994.5], [654, 661, 665, 669, 674, 678, 682, 687, 692, 696, 701.5], 0.6, 1, 3);
path('M953 663h8M953 667h8', 4);
text(1020, 1101, 587.5, 2.6);
table([1005.5, 1013, 1019, 1050.5, 1085, 1092, 1100.5, 1111.5], [590.5, 598, 603, 608, 613, 618, 622, 627, 632, 637, 641, 645, 649.5], 0.66, 1, 3.2);
text(1006, 1078, 655, 2.4); text(1006, 1110, 659, 2.4);
stamp(1013.5, 674.5, 1111.5, 704.5); path('M1050 699h32M1053 701h24', 3);

// Steel structure
sheet(1133.5, 469.5, 1484, 718, 1158.5, 478.5, 1474.5, 707.5, 673);
text(1255, 1340, 485, 2.6);
path('M1190.500 499.500H1447L1446 557H1189.500Z', 1.4);
path('M1199 509H1443M1199 513H1443', 0.9); path('M1199 510.500H1443', 2.6);
path('M1198 546H1440M1198 550.500H1440', 1.2); path('M1199 548h238', 1.4);
path('M1199 519.500H1441M1199 537H1441', 2.6);
path(steps(1205, 1435, 22).map(x => `M${x} 509v4M${x + 2} 518v3M${x + 5} 536v3M${x} 546v5`).join(''), 2);
path('M1205 520c3 5 3 11-1 17M1203 528.500h94M1296 520c3 6 3 11 1 17M1309 520c-3 5-1 11-2 17M1325 520c-3 6-3 11-2 17M1323 528.500h113M1436 520c-3 5-1 11 2 17', 1);
path('M1198 500v12M1318 500v12M1442 500v14M1199 547v13M1316 548v10M1438 546v13', 3.6);
text(1252, 1259, 528, 3.4); text(1373, 1381, 528, 3.4); text(1248, 1258, 516, 3); text(1371, 1378, 516, 3); text(1310, 1315, 526.5, 2);
[1206, 1213, 1283, 1287, 1333, 1340, 1427, 1434].forEach(x => path(`M${x} 511l4-9h2M${x + 3} 511l-5-8`, 1));
[1206, 1212, 1222, 1228, 1395, 1402, 1418, 1428, 1438].forEach(x => path(`M${x} 549l4-8h2M${x + 3} 544l-5 8`, 1));
marks(1192, 500, 1203, 512, 7); marks(1310, 495, 1328, 508, 8); marks(1433, 540, 1446, 562, 10);
path('M1318 500l6-7M1198 500l4-7M1441 500l5-7M1322 548l4 10M1285 537l2 6M1332 537l4 6', 1);
text(1210, 1221, 569, 2.4); text(1320, 1331, 569, 2.4);
// frame elevation
path('M1186 580.500h66M1186 592h66M1186 580l-1 26M1252 580v26M1161 607h117', 2);
path('M1188 592l8-11 8 11 8-11 8 11 8-11 8 11 8-11 8 11M1188 582v10M1203 578v32M1236 578v32', 1.4);
path('M1203 594l33 10M1236 594l-33 10M1185 573v34M1191 583v38M1251 583v38M1258 583v38M1162 618h41M1203 618h33M1236 618h42M1162 627h78M1163 609v18M1277 609v18', 0.9);
path('M1165 603l17-19M1168 606l17-18M1275 603l-16-19M1272 606l-16-18M1181 594v14M1257 594v14', 2); path('M1162 610h4v5M1201 608v8M1236 608v8M1275 608v8', 3);
marks(1163, 584, 1190, 608, 26); marks(1252, 584, 1276, 608, 26); marks(1194, 598, 1248, 608, 16); text(1166, 1202, 626, 2.4); text(1215, 1225, 616.5, 2); text(1240, 1274, 616.5, 2);
// section
path('M1283 576h24M1341 576h23M1283 607h82M1283 598h82M1284 576v31M1364 576v31M1289 575v44M1340 575v44M1306 597v20M1357 600v18', 1.6);
path('M1284 584h22M1284 588h22M1342 584h22M1342 588h22', 1.2); text(1285, 1306, 580.5, 3.4); text(1342, 1364, 580.5, 3.4); text(1285, 1308, 594, 4); text(1342, 1364, 594, 4);
path('M1306 596l4 3 4-3 4 3 4-3 4 3 4-3 4 3 4-3', 1); path('M1290 617.500h69', 1); path('M1289 608v8M1306 608v8M1340 608v8M1357 608v8', 3.4); marks(1284, 575, 1306, 606, 18); marks(1334, 580, 1364, 606, 22); text(1313, 1321, 600, 2); text(1328, 1336, 600, 2); text(1320, 1329, 616, 1.8);
// details
text(1187, 1194, 631.5, 3); text(1225, 1234, 631.5, 2); text(1252, 1263, 631.5, 2); text(1293, 1305, 631.5, 2);
path('M1177 641.500h29', 3); path('M1170 639v54M1188 643v47M1194 643v47M1167 693h16M1176 651h14', 1.1); path('M1191 644v46', 1.4); path('M1184 691h12', 4); marks(1168, 636, 1206, 650, 14); marks(1177, 678, 1202, 694, 16); marks(1178, 668, 1196, 678, 6);
rect(1226, 645, 1232, 651, 1.4); marks(1219, 635, 1234, 652, 14); rect(1251, 640, 1262, 649, 1.4); path('M1247 640v10M1262 640h10v9h-10', 1.2); marks(1244, 636, 1272, 652, 16);
out.push('<circle class="ink" cx="1299.500" cy="646" r="5" stroke-width="2"/>'); rect(1292, 639, 1307, 653, 1); path('M1284 646h24M1285 641v11M1292 657h16M1299 638v22', 1.1); dots([1299], 646, 3); marks(1283, 634, 1292, 656, 12);
out.push('<circle class="ink" cx="1339.500" cy="627.500" r="4.500"/>'); path('M1333 627.500h13M1339.500 621v20M1335 636h10M1334 636v18h12v-18zM1325 637v16M1329 653h20M1329 637h18', 1.3); marks(1315, 632, 1350, 656, 28);
text(1222, 1234, 669.5, 2.4); path('M1229 681v18M1221 687h20M1225 683h9v9h-9zM1213 699h14l3-4', 1.3); dots([1229], 687, 5); marks(1216, 678, 1243, 696, 18); text(1201, 1219, 699, 2.6);
text(1263, 1340, 663.5, 2.6);
table([1255, 1263, 1269, 1288.5, 1307.5, 1315, 1321, 1329, 1337.5, 1346.5, 1357], [665.5, 673, 679, 684, 689, 694, 699, 703, 707.5], 0.72, 1.1, 3);
text(1381, 1455, 566, 2.6);
table([1370, 1379, 1384.5, 1414, 1449, 1455, 1463.5, 1474], [569.5, 577, 581, 585, 590, 594, 598, 603, 607, 611, 616, 621, 625, 630.5], 0.72, 1, 3.2);
text(1372, 1474, 633.5, 2.6); text(1372, 1474, 637, 2.6); text(1372, 1446, 641, 2.6);
stamp(1375.5, 678, 1474.5, 707.5); path('M1417 701h24M1420 703.500h18', 3.4);

document.getElementById('sheets').innerHTML = out.join('');
```
